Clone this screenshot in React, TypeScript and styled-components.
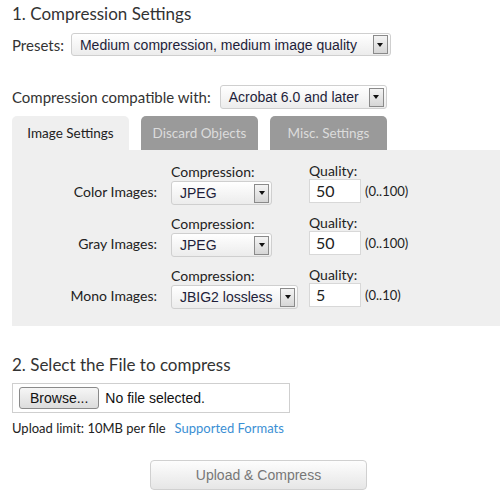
import React from "react";
import styled, { createGlobalStyle } from "styled-components";

const Global = createGlobalStyle`
  html, body { margin: 0; padding: 0; background: #fff; }
  body { font-family: Lato, "Open Sans", sans-serif; color: #333; }
`;

const Page = styled.div`
  width: 500px;
  padding-left: 12px;
  box-sizing: border-box;
`;

const Heading = styled.h2<{ $top: number }>`
  margin: ${(p) => p.$top}px 0 0 0;
  font-size: 17px;
  font-weight: 400;
  line-height: 22px;
  color: #333;
`;

const Row = styled.div<{ $top: number }>`
  display: flex;
  align-items: center;
  margin-top: ${(p) => p.$top}px;
  font-size: 15px;
`;

const Label = styled.span<{ $gap: number }>`
  margin-right: ${(p) => p.$gap}px;
  color: #333;
`;

const SelectBox = styled.div<{ $w: number; $h?: number }>`
  display: flex;
  align-items: center;
  justify-content: space-between;
  box-sizing: border-box;
  width: ${(p) => p.$w}px;
  height: ${(p) => p.$h ?? 24}px;
  padding: 0 2px 0 8px;
  border: 1px solid #cfcfcf;
  border-radius: 3px;
  background: linear-gradient(#ffffff, #ececec);
  font-family: "Liberation Sans", Arial, sans-serif;
  font-size: 14px;
  color: #1e1e3a;
`;

const Arrow = styled.span`
  display: flex;
  align-items: center;
  justify-content: center;
  box-sizing: border-box;
  width: 15px;
  height: 19px;
  border: 1px solid #8a8a8a;
  background: linear-gradient(#f4f4f4, #d6d6d6);
  &::after {
    content: "";
    border-left: 3px solid transparent;
    border-right: 3px solid transparent;
    border-top: 4px solid #111;
  }
`;

const Select = ({ w, h, value }: { w: number; h?: number; value: string }) => (
  <SelectBox $w={w} $h={h}>
    <span>{value}</span>
    <Arrow />
  </SelectBox>
);

const Tabs = styled.div`
  display: flex;
  gap: 12px;
  margin-top: 7px;
`;

const Tab = styled.div<{ $active?: boolean }>`
  width: 117px;
  height: 34px;
  display: flex;
  align-items: center;
  justify-content: center;
  border-radius: 5px 5px 0 0;
  font-size: 13.5px;
  background: ${(p) => (p.$active ? "#efefef" : "#9a9a9a")};
  color: ${(p) => (p.$active ? "#222" : "#dcdcdc")};
`;

const Panel = styled.div`
  background: #efefef;
  height: 176px;
  padding-top: 12px;
  box-sizing: border-box;
  display: flex;
  flex-direction: column;
  gap: 9px;
`;

const ImgRow = styled.div`
  display: flex;
  align-items: flex-end;
`;

const RowLabel = styled.div`
  width: 145px;
  text-align: right;
  font-size: 14px;
  line-height: 24px;
  margin-bottom: 1px;
  color: #222;
`;

const Field = styled.div<{ $w: number; $ml: number }>`
  display: flex;
  flex-direction: column;
  width: ${(p) => p.$w}px;
  margin-left: ${(p) => p.$ml}px;
`;

const FieldLabel = styled.div<{ $mb: number }>`
  font-size: 14px;
  line-height: 17px;
  margin-bottom: ${(p) => p.$mb}px;
  color: #222;
`;

const QualityLine = styled.div`
  display: flex;
  align-items: center;
  gap: 4px;
  margin-bottom: 2px;
`;

const Input = styled.div`
  box-sizing: border-box;
  width: 52px;
  height: 24px;
  background: #fff;
  border: 1px solid #d8d8d8;
  padding-left: 6px;
  font-size: 16px;
  line-height: 22px;
  color: #222;
`;

const Range = styled.span`
  font-size: 13px;
  color: #222;
`;

const FileBox = styled.div`
  box-sizing: border-box;
  width: 278px;
  height: 30px;
  margin-top: 7px;
  border: 1px solid #cfcfcf;
  display: flex;
  align-items: center;
  padding-left: 6px;
  gap: 6px;
  font-family: "Liberation Sans", Arial, sans-serif;
  font-size: 14px;
  color: #111;
`;

const Browse = styled.div`
  box-sizing: border-box;
  height: 22px;
  padding: 0 10px;
  display: flex;
  align-items: center;
  border: 1px solid #8a8a8a;
  border-radius: 3px;
  background: linear-gradient(#f6f6f6, #dcdcdc);
`;

const Note = styled.div`
  margin-top: 7px;
  font-size: 13px;
  color: #222;
  display: flex;
  gap: 9px;
`;

const Link = styled.a`
  color: #3b8fd4;
  text-decoration: none;
`;

const SubmitWrap = styled.div`
  display: flex;
  padding-left: 138px;
  margin-top: 24px;
`;

const Submit = styled.div`
  box-sizing: border-box;
  width: 217px;
  height: 30px;
  display: flex;
  align-items: center;
  justify-content: center;
  border: 1px solid #d0d0d0;
  border-radius: 4px;
  background: linear-gradient(#fdfdfd, #e6e6e6);
  font-family: "Liberation Sans", Arial, sans-serif;
  font-size: 14px;
  color: #777;
`;

const rows = [
  { label: "Color Images:", comp: "JPEG", cw: 101, q: "50", range: "(0..100)" },
  { label: "Gray Images:", comp: "JPEG", cw: 101, q: "50", range: "(0..100)" },
  { label: "Mono Images:", comp: "JBIG2 lossless", cw: 127, q: "5", range: "(0..10)" },
];

export default function App() {
  return (
    <Page>
      <Global />
      <Heading $top={3}>1. Compression Settings</Heading>
      <Row $top={8}>
        <Label $gap={7}>Presets:</Label>
        <Select w={320} h={23} value="Medium compression, medium image quality" />
      </Row>
      <Row $top={29}>
        <Label $gap={9}>Compression compatible with:</Label>
        <Select w={167} value="Acrobat 6.0 and later" />
      </Row>
      <Tabs>
        <Tab $active>Image Settings</Tab>
        <Tab>Discard Objects</Tab>
        <Tab>Misc. Settings</Tab>
      </Tabs>
      <Panel>
        {rows.map((r) => (
          <ImgRow key={r.label}>
            <RowLabel>{r.label}</RowLabel>
            <Field $w={138} $ml={14}>
              <FieldLabel $mb={1}>Compression:</FieldLabel>
              <Select w={r.cw} value={r.comp} />
            </Field>
            <Field $w={120} $ml={0}>
              <FieldLabel $mb={0}>Quality:</FieldLabel>
              <QualityLine>
                <Input>{r.q}</Input>
                <Range>{r.range}</Range>
              </QualityLine>
            </Field>
          </ImgRow>
        ))}
      </Panel>
      <Heading $top={28}>2. Select the File to compress</Heading>
      <FileBox>
        <Browse>Browse...</Browse>
        <span>No file selected.</span>
      </FileBox>
      <Note>
        <span>Upload limit: 10MB per file</span>
        <Link href="#">Supported Formats</Link>
      </Note>
      <SubmitWrap>
        <Submit>Upload &amp; Compress</Submit>
      </SubmitWrap>
    </Page>
  );
}
